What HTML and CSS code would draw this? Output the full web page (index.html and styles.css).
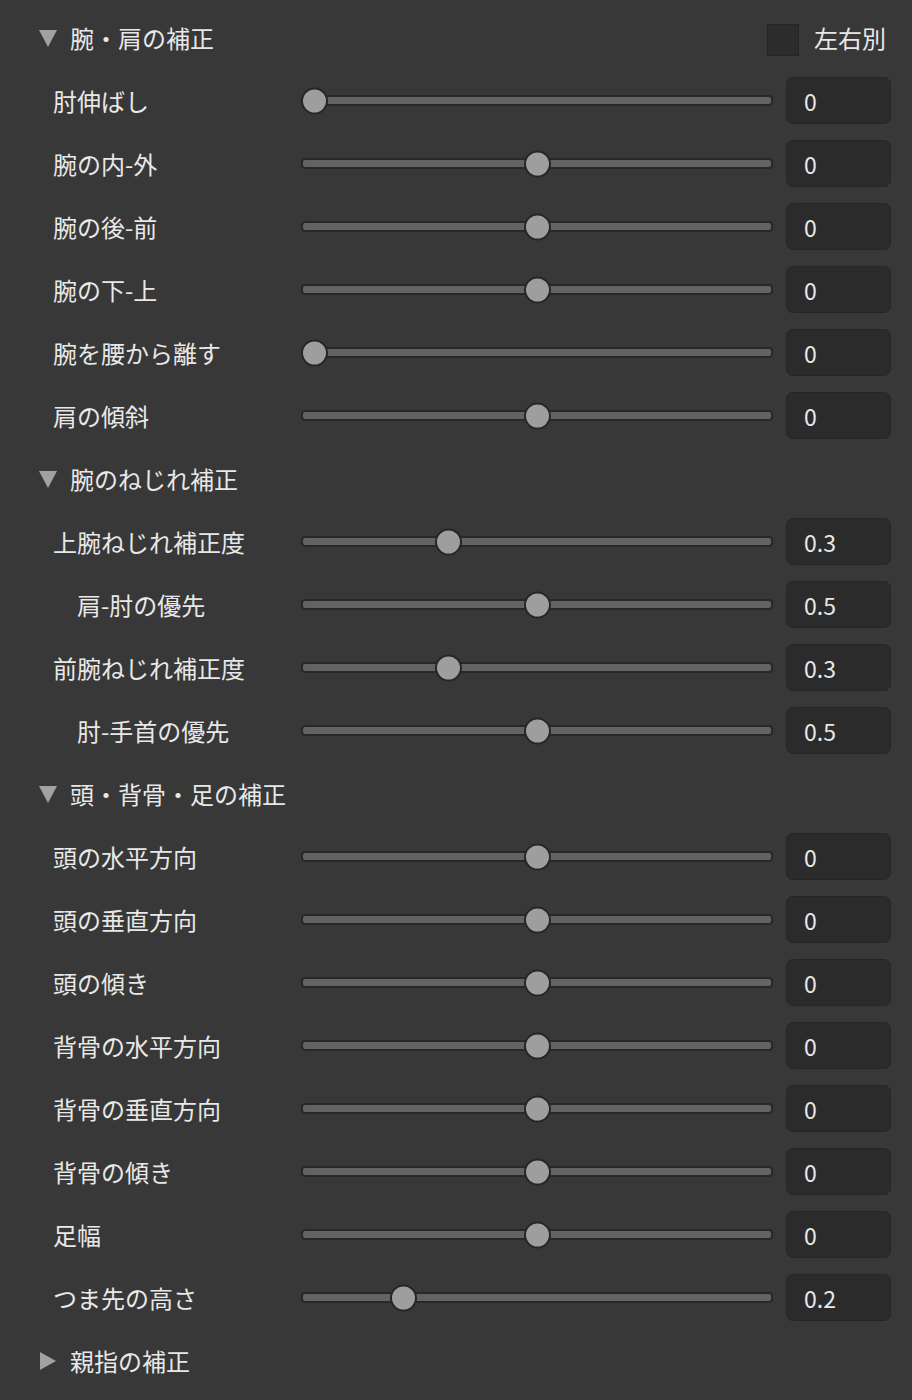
FILE: index.html
```html
<!DOCTYPE html>
<html lang="ja">
<head>
<meta charset="utf-8">
<link rel="stylesheet" href="styles.css">
</head>
<body>
<div class="panel">
  <div class="header">
    <svg class="tri" width="18" height="18" viewBox="0 0 18 18"><polygon points="0,1 18,1 9,18" /></svg>
    <span class="htext">腕・肩の補正</span>
    <label class="check"><span class="box"></span><span>左右別</span></label>
  </div>
  <div class="row"><span class="label">肘伸ばし</span><div class="track"><span class="thumb" style="--p:0"></span></div><div class="num">0</div></div>
  <div class="row"><span class="label">腕の内-外</span><div class="track"><span class="thumb" style="--p:0.5"></span></div><div class="num">0</div></div>
  <div class="row"><span class="label">腕の後-前</span><div class="track"><span class="thumb" style="--p:0.5"></span></div><div class="num">0</div></div>
  <div class="row"><span class="label">腕の下-上</span><div class="track"><span class="thumb" style="--p:0.5"></span></div><div class="num">0</div></div>
  <div class="row"><span class="label">腕を腰から離す</span><div class="track"><span class="thumb" style="--p:0"></span></div><div class="num">0</div></div>
  <div class="row"><span class="label">肩の傾斜</span><div class="track"><span class="thumb" style="--p:0.5"></span></div><div class="num">0</div></div>

  <div class="header">
    <svg class="tri" width="18" height="18" viewBox="0 0 18 18"><polygon points="0,1 18,1 9,18" /></svg>
    <span class="htext">腕のねじれ補正</span>
  </div>
  <div class="row"><span class="label">上腕ねじれ補正度</span><div class="track"><span class="thumb" style="--p:0.3"></span></div><div class="num">0.3</div></div>
  <div class="row"><span class="label sub">肩-肘の優先</span><div class="track"><span class="thumb" style="--p:0.5"></span></div><div class="num">0.5</div></div>
  <div class="row"><span class="label">前腕ねじれ補正度</span><div class="track"><span class="thumb" style="--p:0.3"></span></div><div class="num">0.3</div></div>
  <div class="row"><span class="label sub">肘-手首の優先</span><div class="track"><span class="thumb" style="--p:0.5"></span></div><div class="num">0.5</div></div>

  <div class="header">
    <svg class="tri" width="18" height="18" viewBox="0 0 18 18"><polygon points="0,1 18,1 9,18" /></svg>
    <span class="htext">頭・背骨・足の補正</span>
  </div>
  <div class="row"><span class="label">頭の水平方向</span><div class="track"><span class="thumb" style="--p:0.5"></span></div><div class="num">0</div></div>
  <div class="row"><span class="label">頭の垂直方向</span><div class="track"><span class="thumb" style="--p:0.5"></span></div><div class="num">0</div></div>
  <div class="row"><span class="label">頭の傾き</span><div class="track"><span class="thumb" style="--p:0.5"></span></div><div class="num">0</div></div>
  <div class="row"><span class="label">背骨の水平方向</span><div class="track"><span class="thumb" style="--p:0.5"></span></div><div class="num">0</div></div>
  <div class="row"><span class="label">背骨の垂直方向</span><div class="track"><span class="thumb" style="--p:0.5"></span></div><div class="num">0</div></div>
  <div class="row"><span class="label">背骨の傾き</span><div class="track"><span class="thumb" style="--p:0.5"></span></div><div class="num">0</div></div>
  <div class="row"><span class="label">足幅</span><div class="track"><span class="thumb" style="--p:0.5"></span></div><div class="num">0</div></div>
  <div class="row"><span class="label">つま先の高さ</span><div class="track"><span class="thumb" style="--p:0.2"></span></div><div class="num">0.2</div></div>

  <div class="header">
    <svg class="tri" width="18" height="18" viewBox="0 0 18 18"><polygon points="1,0 17,9 1,18" /></svg>
    <span class="htext">親指の補正</span>
  </div>
</div>
</body>
</html>
```

FILE: styles.css
```css
html, body {
  margin: 0;
  padding: 0;
  background: #383838;
}
body {
  font-family: "Noto Sans CJK JP", "Noto Sans", sans-serif;
  font-size: 24px;
  color: #e8e8e8;
  width: 912px;
  height: 1400px;
  overflow: hidden;
}
.panel {
  padding-top: 6px;
}
.header {
  height: 63px;
  display: flex;
  align-items: center;
  padding-left: 39px;
  padding-right: 26px;
}
.tri {
  fill: #a2a2a2;
  flex: none;
}
.htext {
  margin-left: 13px;
  flex: 1;
}
.check {
  display: flex;
  align-items: center;
  gap: 15px;
}
.box {
  width: 30px;
  height: 30px;
  margin-top: 4px;
  background: #2c2c2c;
  border: 1px solid #262626;
}
.row {
  height: 63px;
  display: grid;
  grid-template-columns: 301px 472px 118px;
  align-items: center;
}
.label {
  padding-left: 53px;
  white-space: nowrap;
}
.label.sub {
  padding-left: 77px;
}
.track {
  position: relative;
  height: 11px;
  box-sizing: border-box;
  background: #636363;
  border: 2px solid #282828;
  border-radius: 4px;
}
.thumb {
  position: absolute;
  top: 50%;
  left: calc(-2px + var(--p) * 446px);
  width: 27px;
  height: 27px;
  box-sizing: border-box;
  border-radius: 50%;
  background: #9e9e9e;
  border: 2px solid #262626;
  transform: translateY(-50%);
}
.num {
  margin-left: 13px;
  height: 47px;
  box-sizing: border-box;
  background: #2b2b2b;
  border: 1px solid #262626;
  border-radius: 7px;
  display: flex;
  align-items: center;
  padding-left: 17px;
  font-size: 23px;
}
```
